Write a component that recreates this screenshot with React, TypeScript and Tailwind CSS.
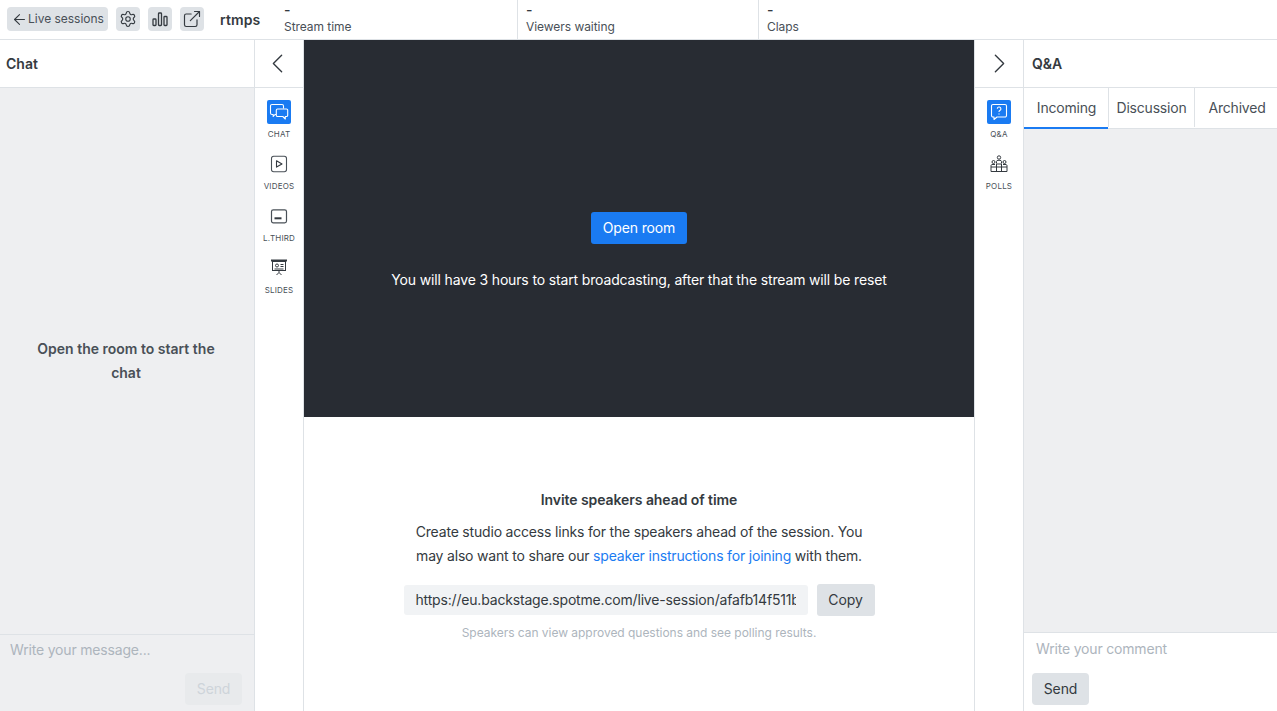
import { ArrowLeft, ChevronLeft, ChevronRight, Settings, ExternalLink } from "lucide-react";

function BarsIcon() {
  return (
    <svg width="18" height="18" viewBox="0 0 18 18" fill="none" stroke="currentColor" strokeWidth="1.3">
      <rect x="2" y="9" width="3" height="6.500" rx="0.800" />
      <rect x="7.500" y="3" width="3" height="12.500" rx="0.800" />
      <rect x="13" y="6.500" width="3" height="9" rx="0.800" />
    </svg>
  );
}

function ChatIcon() {
  return (
    <svg width="20" height="18" viewBox="0 0 20 18" fill="none" stroke="white" strokeWidth="1.100" strokeLinejoin="round">
      <path d="M3 1.500h10A1.500 1.500 0 0 1 14.500 3v2.500" />
      <path d="M7 11.500H6L4.200 13.500v-2H3A1.500 1.500 0 0 1 1.500 10V3A1.500 1.500 0 0 1 3 1.500" />
      <path d="M8.500 6h9A1.200 1.200 0 0 1 18.700 7.200v5.100a1.200 1.200 0 0 1-1.200 1.200h-1.200v2.500l-2.500-2.500H8.500a1.200 1.200 0 0 1-1.200-1.200V7.200A1.200 1.200 0 0 1 8.500 6Z" />
    </svg>
  );
}

function VideoIcon() {
  return (
    <svg width="18" height="18" viewBox="0 0 18 18" fill="none" stroke="#495057" strokeWidth="1.100" strokeLinejoin="round">
      <rect x="1.500" y="1.200" width="15" height="15.500" rx="2.200" />
      <path d="M6.500 5.700 12 8.900l-5.500 3.200Z" stroke="#343a40" />
    </svg>
  );
}

function ThirdIcon() {
  return (
    <svg width="18" height="18" viewBox="0 0 18 18" fill="none">
      <rect x="1.500" y="2.800" width="15" height="13" rx="1.800" stroke="#495057" strokeWidth="1.200" />
      <rect x="4.500" y="10.300" width="7" height="2" fill="#343a40" />
    </svg>
  );
}

function SlidesIcon() {
  return (
    <svg width="18" height="18" viewBox="0 0 18 18" fill="none" stroke="#343a40" strokeWidth="1">
      <path d="M1 1.500h16" strokeWidth="2" />
      <rect x="2.500" y="2.500" width="13" height="9" />
      <circle cx="7" cy="6.500" r="1.500" />
      <path d="M10.500 5.500h3M10.500 7.500h3M4.500 10h9M9 11.500v2M9 13.500 6.500 16M9 13.500l2.500 2.500" />
    </svg>
  );
}

function QaIcon() {
  return (
    <svg width="18" height="18" viewBox="0 0 18 18" fill="none" stroke="white" strokeWidth="1.100" strokeLinejoin="round">
      <path d="M3 1.500h12A1.500 1.500 0 0 1 16.500 3v9.500A1.500 1.500 0 0 1 15 14H7l-3 2.500V14H3a1.500 1.500 0 0 1-1.500-1.500V3A1.500 1.500 0 0 1 3 1.500Z" />
      <path d="M7.300 5.800A1.800 1.800 0 1 1 9.800 7.500c-.6.300-.8.700-.8 1.400" />
      <path d="M9 10.600v.9" />
    </svg>
  );
}

function PollsIcon() {
  return (
    <svg width="18" height="18" viewBox="0 0 18 18" fill="none" stroke="#343a40" strokeWidth="1">
      <circle cx="9" cy="2.500" r="1.700" />
      <circle cx="3.500" cy="7" r="1.500" />
      <circle cx="14.500" cy="7" r="1.500" />
      <path d="M6.500 8.500V6.500a1.500 1.500 0 0 1 1.500-1.200h2a1.500 1.500 0 0 1 1.500 1.200v2" />
      <path d="M1 16.500V10.500a1.500 1.500 0 0 1 1-1h3M17 16.500V10.500a1.500 1.500 0 0 0-1-1h-3" />
      <path d="M1 12h16M1 16.500h16M6.500 9v7.500M11.500 9v7.500M6.500 9h5" />
    </svg>
  );
}

function Stat({ className, label }: { className: string; label: string }) {
  return (
    <div className={`flex flex-col pl-[8px] h-full border-r border-[#dee2e6] ${className}`}>
      <span className="text-[14px] leading-[20px] h-[19px] font-medium text-[#343a40]">-</span>
      <span className="text-[12px] leading-[16px] tracking-[-0.05px] text-[#495057]">{label}</span>
    </div>
  );
}

function RailItem({ icon, label, active }: { icon: React.ReactNode; label: string; active?: boolean }) {
  return (
    <div className="h-[52px] flex flex-col items-center">
      <div className={`w-[24px] h-[24px] rounded-[2px] flex items-center justify-center ${active ? "bg-[#1a7bf2]" : ""}`}>
        {icon}
      </div>
      <span className="mt-[5px] text-[8px] leading-[10px] tracking-[0.2px] text-[#495057]">{label}</span>
    </div>
  );
}

export default function App() {
  return (
    <div className="w-[1277px] h-[711px] overflow-hidden flex flex-col bg-white text-[#343a40] font-['Inter',sans-serif]">
      {/* top bar */}
      <div className="h-[40px] shrink-0 flex items-start border-b border-[#dee2e6]">
        <div className="flex items-center gap-[8px] pl-[7px] pt-[7px] w-[276px]">
          <button className="h-[24px] w-[101px] rounded-[4px] bg-[#dee2e6] flex items-center pl-[4px] text-[12px] tracking-[-0.02px] text-[#495057]">
            <ArrowLeft size={17} strokeWidth={1.500} className="text-[#343a40] shrink-0" />
            Live sessions
          </button>
          <button className="w-[24px] h-[24px] rounded-[4px] bg-[#dee2e6] flex items-center justify-center">
            <Settings size={18} strokeWidth={1.500} />
          </button>
          <button className="w-[24px] h-[24px] rounded-[4px] bg-[#dee2e6] flex items-center justify-center">
            <BarsIcon />
          </button>
          <button className="w-[24px] h-[24px] rounded-[4px] bg-[#dee2e6] flex items-center justify-center">
            <ExternalLink size={20} strokeWidth={1.400} />
          </button>
          <span className="ml-[8px] text-[14px] font-semibold tracking-[0.1px] text-[#343a40]">rtmps</span>
        </div>
        <Stat className="w-[242px]" label="Stream time" />
        <Stat className="w-[241px]" label="Viewers waiting" />
        <Stat className="w-[240px] border-r-0" label="Claps" />
      </div>

      <div className="flex-1 min-h-0 flex">
        {/* chat */}
        <div className="w-[255px] shrink-0 flex flex-col border-r border-[#dee2e6]">
          <div className="h-[48px] shrink-0 flex items-center pl-[6px] border-b border-[#dee2e6] text-[14px] font-semibold">Chat</div>
          <div className="flex-1 bg-[#eeeff1] flex items-center justify-center pl-[31px] pr-[33px] text-center text-[14px] leading-[24px] font-semibold text-[#495057]">
            Open the room to start the chat
          </div>
          <div className="h-[77px] shrink-0 bg-[#eeeff1] border-t border-[#dee2e6] flex flex-col">
            <div className="pl-[10px] pt-[5px] text-[14px] leading-[20px] tracking-[-0.18px] text-[#adb5bd]">Write your message...</div>
            <div className="flex justify-end pr-[12px] pt-[13px]">
              <button className="w-[57px] h-[32px] pb-[1px] rounded-[4px] bg-[#e8eaec] text-[14px] tracking-[-0.18px] text-[#ced4da]">Send</button>
            </div>
          </div>
        </div>

        {/* left rail */}
        <div className="w-[49px] shrink-0 flex flex-col border-r border-[#dee2e6]">
          <div className="h-[48px] shrink-0 flex items-center justify-center pr-[3px] border-b border-[#dee2e6]">
            <ChevronLeft size={33} strokeWidth={1} />
          </div>
          <div className="flex flex-col pt-[12px]">
            <RailItem active icon={<ChatIcon />} label="CHAT" />
            <RailItem icon={<VideoIcon />} label="VIDEOS" />
            <RailItem icon={<ThirdIcon />} label="L.THIRD" />
            <RailItem icon={<SlidesIcon />} label="SLIDES" />
          </div>
        </div>

        {/* center */}
        <div className="w-[671px] shrink-0 flex flex-col border-r border-[#dee2e6]">
          <div className="h-[377px] shrink-0 bg-[#282c33] flex flex-col items-center pt-[172px] text-white tracking-[-0.15px]">
            <button className="w-[96px] h-[32px] pb-[1px] rounded-[3px] bg-[#1a7bf2] text-[14px]">Open room</button>
            <p className="mt-[24px] text-[14px] leading-[24px]">You will have 3 hours to start broadcasting, after that the stream will be reset</p>
          </div>
          <div className="flex-1 flex flex-col items-center pt-[71px]">
            <h3 className="text-[14px] leading-[24px] font-semibold tracking-[-0.07px] text-[#343a40]">Invite speakers ahead of time</h3>
            <p className="mt-[8px] w-[470px] text-center text-[14px] leading-[24px] tracking-[-0.19px] text-[#343a40]">
              Create studio access links for the speakers ahead of the session. You may also want to share our{" "}
              <a className="text-[#1a7bf2]">speaker instructions for joining</a> with them.
            </p>
            <div className="mt-[16px] flex items-center gap-[9px]">
              <input
                readOnly
                value="https://eu.backstage.spotme.com/live-session/afafb14f511b8c2e"
                className="w-[404px] h-[30px] pb-[1px] rounded-[3px] bg-[#f1f3f5] px-[12px] text-[14px] tracking-[-0.18px] text-[#343a40] outline-none"
              />
              <button className="w-[58px] h-[32px] pb-[1px] rounded-[3px] bg-[#dee2e6] text-[14px] tracking-[-0.1px] text-[#343a40]">Copy</button>
            </div>
            <p className="mt-[9px] text-[12px] leading-[16px] tracking-[-0.03px] text-[#adb5bd]">Speakers can view approved questions and see polling results.</p>
          </div>
        </div>

        {/* right rail */}
        <div className="w-[49px] shrink-0 flex flex-col border-r border-[#dee2e6]">
          <div className="h-[48px] shrink-0 flex items-center justify-center border-b border-[#dee2e6]">
            <ChevronRight size={33} strokeWidth={1} />
          </div>
          <div className="flex flex-col pt-[12px]">
            <RailItem active icon={<QaIcon />} label="Q&A" />
            <RailItem icon={<PollsIcon />} label="POLLS" />
          </div>
        </div>

        {/* Q&A */}
        <div className="flex-1 min-w-0 flex flex-col">
          <div className="h-[48px] shrink-0 flex items-center pl-[8px] border-b border-[#dee2e6] text-[14px] font-semibold">Q&amp;A</div>
          <div className="h-[41px] shrink-0 flex pb-[1px] border-b border-[#dee2e6] text-[14px] tracking-[-0.2px] text-[#495057]">
            <div className="relative w-[85px] pl-[1px] flex items-center justify-center border-r border-[#dee2e6]">
              Incoming
              <span className="absolute left-0 right-0 bottom-[-2px] h-[2px] bg-[#1a7bf2]" />
            </div>
            <div className="w-[86px] flex items-center justify-center border-r border-[#dee2e6]">Discussion</div>
            <div className="flex-1 pl-[2px] flex items-center justify-center">Archived</div>
          </div>
          <div className="flex-1 bg-[#eeeff1]" />
          <div className="h-[79px] shrink-0 border-t border-[#dee2e6] flex flex-col">
            <div className="pl-[12px] pt-[6px] text-[14px] leading-[20px] tracking-[-0.18px] text-[#adb5bd]">Write your comment</div>
            <div className="pl-[8px] pt-[14px]">
              <button className="w-[57px] h-[32px] pb-[1px] rounded-[4px] bg-[#dee2e6] text-[14px] tracking-[-0.1px] text-[#343a40]">Send</button>
            </div>
          </div>
        </div>
      </div>
    </div>
  );
}
